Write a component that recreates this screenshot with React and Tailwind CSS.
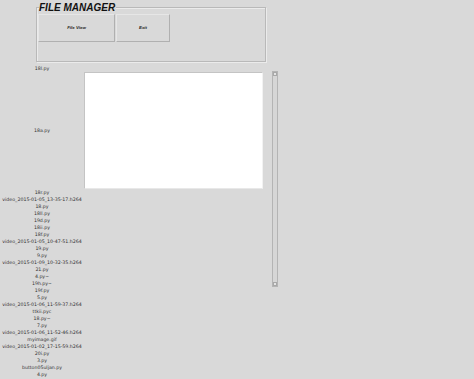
import React from "react";

const files = [
  "18r.py",
  "video_2015-01-05_13-35-17.h264",
  "18.py",
  "18ll.py",
  "19d.py",
  "18ii.py",
  "18f.py",
  "video_2015-01-05_10-47-51.h264",
  "19.py",
  "9.py",
  "video_2015-01-09_10-32-35.h264",
  "21.py",
  "4.py~",
  "19h.py~",
  "19f.py",
  "5.py",
  "video_2015-01-06_11-59-37.h264",
  "ttkii.pyc",
  "18.py~",
  "7.py",
  "video_2015-01-06_11-52-46.h264",
  "myimage.gif",
  "video_2015-01-02_17-15-59.h264",
  "20i.py",
  "3.py",
  "button05uljan.py",
  "4.py",
];

function Label({ children, className = "" }) {
  return (
    <div
      className={`text-center text-[4.7px] leading-[7px] text-[#333] whitespace-nowrap ${className}`}
      style={{ fontFamily: '"DejaVu Sans", sans-serif' }}
    >
      {children}
    </div>
  );
}

function TkButton({ children, className = "" }) {
  return (
    <button
      className={`h-[28px] flex items-center justify-center bg-[#d9d9d9] border border-t-[#e6e6e6] border-l-[#e6e6e6] border-r-[#b0b0b0] border-b-[#b0b0b0] text-[4.4px] font-bold italic text-[#222] ${className}`}
      style={{ fontFamily: '"Liberation Sans", Arial, sans-serif' }}
    >
      {children}
    </button>
  );
}

export default function App() {
  return (
    <div className="w-[474px] h-[379px] bg-[#d9d9d9] overflow-hidden">
      <div className="pt-[7px] pl-[36px]">
        <div className="relative w-[230px] h-[55px] border border-[#b9b9b9] shadow-[inset_1px_1px_0_#ebebeb,1px_1px_0_#ebebeb] pt-[6px] pl-[1px]">
          <span
            className="absolute left-[2px] top-[-5px] bg-[#d9d9d9] text-[10px] leading-[10px] font-bold italic text-[#111] pr-[1px]"
            style={{ fontFamily: '"Liberation Sans", Arial, sans-serif' }}
          >
            FILE MANAGER
          </span>
          <div className="flex gap-[1px]">
            <TkButton className="w-[77px]">File View</TkButton>
            <TkButton className="w-[54px]">Exit</TkButton>
          </div>
        </div>
      </div>
      <div className="mt-[3px] grid grid-cols-[84px_180px_14px] grid-rows-[7px_117px] auto-rows-[7px]">
        <Label className="col-start-1 row-start-1">18l.py</Label>
        <div className="col-start-1 row-start-2 flex items-center justify-center">
          <Label>18a.py</Label>
        </div>
        <div className="col-start-2 row-start-2">
          <div className="h-[117px] w-[179px] bg-white border-l border-t border-[#c4c4c4] border-b border-b-[#e8e8e8] border-r border-r-[#f2f2f2]"></div>
        </div>
        <div className="col-start-3 row-start-2 row-span-15 pl-[8px]">
          <div className="-mt-[1px] h-[216px] w-[6px] border border-[#b4b4b4] bg-[#d6d6d6] flex flex-col justify-between">
            <div className="h-[4px] w-[4px] border border-[#a8a8a8] bg-[#e4e4e4]"></div>
            <div className="h-[4px] w-[4px] border border-[#a8a8a8] bg-[#e4e4e4]"></div>
          </div>
        </div>
        {files.map((f, i) => (
          <Label key={i} className="col-start-1">
            {f}
          </Label>
        ))}
      </div>
    </div>
  );
}
